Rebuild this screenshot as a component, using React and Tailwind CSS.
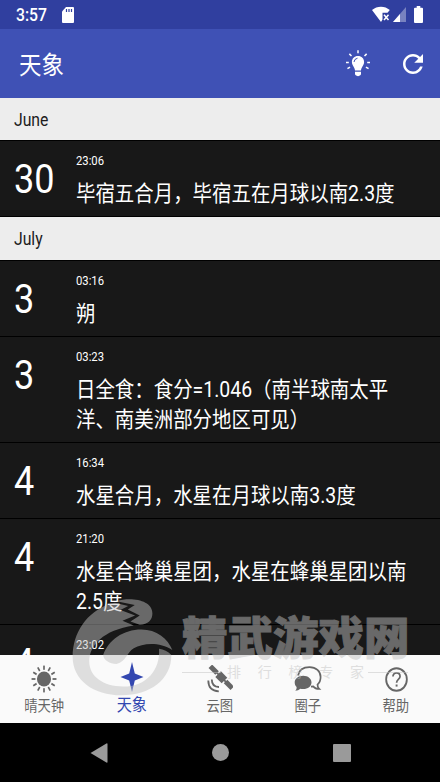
import React from 'react';

const SECTIONS = [
  {
    month: 'June',
    events: [{ day: 30, time: '23:06', text: '毕宿五合月，毕宿五在月球以南2.3度' }],
  },
  {
    month: 'July',
    events: [
      { day: 3, time: '03:16', text: '朔' },
      { day: 3, time: '03:23', text: '日全食：食分=1.046（南半球南太平洋、南美洲部分地区可见）' },
      { day: 4, time: '16:34', text: '水星合月，水星在月球以南3.3度' },
      { day: 4, time: '21:20', text: '水星合蜂巢星团，水星在蜂巢星团以南2.5度' },
      { day: 4, time: '23:02', text: '' },
    ],
  },
];

const RAYS = [0, 30, 60, 90, 120, 150, 180, 210, 240, 270, 300, 330];
const BULB_RAYS = [-120, -90, -45, 0, 45, 90, 120];

function SunIcon() {
  return (
    <svg className="h-[28px] w-[26px]" viewBox="0 0 28 28" preserveAspectRatio="none" fill="currentColor">
      <circle cx="14" cy="14" r="7.6" />
      {RAYS.map((a) => (
        <rect key={a} x="13.1" y="0.6" width="1.8" height="4.2" transform={`rotate(${a} 14 14)`} />
      ))}
    </svg>
  );
}

function StarIcon() {
  return (
    <svg className="h-[30px] w-[24px]" viewBox="0 0 24 30" fill="currentColor">
      <path d="M12 0 L14.800 11.500 L23.500 15 L14.800 18.500 L12 30 L9.200 18.500 L0.500 15 L9.200 11.500Z" />
    </svg>
  );
}

function SatelliteIcon() {
  return (
    <svg className="h-[28px] w-[26px]" viewBox="0 0 26 28">
      <g transform="translate(14.3 12.300) rotate(45)" fill="currentColor">
        <rect x="-15.500" y="-2.500" width="9.500" height="5" />
        <rect x="-6.500" y="-0.900" width="13" height="1.800" />
        <rect x="-4.500" y="-4" width="9" height="8" />
        <rect x="6" y="-2.500" width="9.500" height="5" />
      </g>
      <g fill="none" stroke="currentColor" strokeWidth="1.800">
        <path d="M4.800 14.500 C4.800 19.500 7.500 22 12 22" />
        <path d="M1.300 15.500 C1.300 22 5 26 11.800 26.300" />
      </g>
    </svg>
  );
}

function ChatIcon() {
  return (
    <svg className="h-[26px] w-[28px]" viewBox="0 0 28 26">
      <path
        d="M4 9.500 C5 4 9.500 1.200 15.500 1.200 C22 1.200 26.600 5.300 26.600 11 C26.600 14.500 25.300 17 23.500 18.600 C23.500 20.600 24 21.800 25.200 22.900 C22.500 22.900 20.500 22 19.300 20.400 L17 20.600"
        fill="none"
        stroke="currentColor"
        strokeWidth="1.700"
      />
      <path
        d="M9.200 9.800 C14 9.800 17.500 12.700 17.500 16.500 C17.500 20.300 14 23 9.200 23 C8.200 23 7.200 22.900 6.300 22.700 C5 24 3.300 24.700 1.300 24.700 C2.200 23.700 2.700 22.500 2.600 20.900 C1.300 19.700 0.700 18.200 0.700 16.500 C0.700 12.700 4.400 9.800 9.200 9.800Z"
        fill="currentColor"
      />
    </svg>
  );
}

function HelpIcon() {
  return (
    <svg className="h-[25px] w-[23px]" viewBox="0 0 24 24" preserveAspectRatio="none" fill="none">
      <circle cx="12" cy="12" r="10.800" stroke="currentColor" strokeWidth="1.900" />
      <path
        d="M8.300 9.200 C8.300 7 9.900 5.600 12 5.600 C14.100 5.600 15.700 7 15.700 9 C15.700 11.800 12.100 12 12.100 15"
        stroke="currentColor"
        strokeWidth="1.800"
      />
      <rect x="11.100" y="16.800" width="2" height="2" fill="currentColor" />
    </svg>
  );
}

const TABS = [
  { label: '晴天钟', icon: SunIcon },
  { label: '天象', icon: StarIcon, active: true },
  { label: '云图', icon: SatelliteIcon },
  { label: '圈子', icon: ChatIcon },
  { label: '帮助', icon: HelpIcon },
];

function StatusBar() {
  return (
    <div className="flex h-[29px] shrink-0 items-center bg-[#303f9f] pl-4 pr-[17px] text-white">
      <span className="w-[35px] origin-left scale-x-90 pt-[2px] text-[17.5px] font-medium leading-none">3:57</span>
      <svg className="ml-[11px] h-[16px] w-[12px]" viewBox="0 0 12 16">
        <path d="M4 0 H11 Q12 0 12 1 V15 Q12 16 11 16 H1 Q0 16 0 15 V4.500Z" fill="#fff" />
        <path d="M4.500 2 V5 M7 2 V5 M9.500 2 V5" stroke="#303f9f" strokeWidth="1.200" />
      </svg>
      <div className="flex-1" />
      <svg className="h-[17px] w-[18px]" viewBox="0 0 18 17">
        <path d="M0 4 C5 -0.500 13 -0.500 17.800 4 L15.500 6.800 H10.500 V13.500 L9 16Z" fill="#fff" />
        <path d="M12 8.800 L16.500 14 M16.500 8.800 L12 14" stroke="#fff" strokeWidth="1.500" />
      </svg>
      <svg className="ml-[3px] h-[15px] w-[13px]" viewBox="0 0 13 15">
        <path d="M13 0 V15 H0Z" fill="#fff" fillOpacity="0.350" />
        <path d="M7 7 V15 H0Z" fill="#fff" />
      </svg>
      <svg className="ml-[8px] h-[17px] w-[9px]" viewBox="0 0 9 17" fill="#fff">
        <path d="M2.700 0 H6.300 V1.700 H8 Q9 1.700 9 2.700 V16 Q9 17 8 17 H1 Q0 17 0 16 V2.700 Q0 1.700 1 1.700 H2.700Z" />
      </svg>
    </div>
  );
}

function AppBar() {
  return (
    <header className="flex h-[69px] shrink-0 items-center bg-[#3f51b5] pl-[19px] pr-[17px] text-white">
      <h1 className="origin-left scale-x-90 pt-[3px] text-[25px] leading-none">天象</h1>
      <div className="flex-1" />
      <svg className="mr-[33px] h-[27px] w-[24px]" viewBox="0 0 24 27">
        <g stroke="#fff" strokeWidth="1.500">
          {BULB_RAYS.map((a) => (
            <path key={a} d="M12 3.300 V0.300" transform={`rotate(${a} 12 12.500)`} />
          ))}
        </g>
        <path
          d="M12 6 C15.600 6 18.100 8.600 18.100 12 C18.100 15.500 15.200 17 15 20.500 H9 C8.800 17 5.900 15.500 5.900 12 C5.900 8.600 8.400 6 12 6Z"
          fill="#fff"
        />
        <path d="M9 21.800 H15 V23.800 Q15 25.800 12 26.200 Q9 25.800 9 23.800Z" fill="#fff" />
        <path d="M8 12 Q8.300 8.800 11.500 8.200" fill="none" stroke="#3f51b5" strokeWidth="1" />
      </svg>
      <svg className="h-[20px] w-[20px]" viewBox="4 4 16 16" preserveAspectRatio="none" fill="#fff">
        <path d="M17.650 6.350C16.200 4.900 14.210 4 12 4c-4.420 0-7.990 3.580-7.990 8s3.570 8 7.990 8c3.730 0 6.840-2.550 7.730-6h-2.080c-.82 2.330-3.040 4-5.650 4-3.310 0-6-2.690-6-6s2.690-6 6-6c1.660 0 3.140.69 4.220 1.780L13 11h7V4l-2.350 2.350z" />
      </svg>
    </header>
  );
}

function EventRow({ day, time, text }) {
  return (
    <li className="flex items-start border-b border-black bg-[#181818] pb-[7.5px] text-white">
      <div className="w-[76px] shrink-0 pl-[14px] pt-[19px]">
        <div className="origin-left scale-x-90 text-[40px] leading-[40px]">{day}</div>
      </div>
      {/* glyphs are condensed to 90%, so the box is widened to keep the wrap point */}
      <div className="w-[389px] shrink-0 origin-left scale-x-90 pt-3">
        <div className="text-[12.5px] leading-[15px]">{time}</div>
        <p className="mt-[10.5px] text-[21.6px] leading-[30px]">{text}</p>
      </div>
    </li>
  );
}

function EventList() {
  return (
    <main className="min-h-0 flex-1 overflow-hidden bg-[#181818]">
      {SECTIONS.map((section) => (
        <section key={section.month}>
          <h2 className="flex h-[43px] items-center border-b border-black bg-[#ededed] pl-[14px] pt-[2px] text-[#1c1c1c] [section+section>&]:h-[44px]">
            <span className="origin-left scale-x-90 text-[17.5px]">{section.month}</span>
          </h2>
          <ul>
            {section.events.map((event) => (
              <EventRow key={event.time} {...event} />
            ))}
          </ul>
        </section>
      ))}
    </main>
  );
}

function TabBar() {
  return (
    <nav className="grid h-[68px] shrink-0 grid-cols-5 bg-[#fafafa]">
      {TABS.map(({ label, icon: Icon, active }) => (
        <div
          key={label}
          className={`flex flex-col items-center ${active ? 'text-[#3347b0]' : 'text-[#666666]'}`}
        >
          <div className={`flex h-[30px] items-center ${active ? 'mt-[7px]' : 'mt-[9px]'}`}>
            <Icon />
          </div>
          <span
            className={`scale-x-90 whitespace-nowrap leading-[20px] ${
              active ? 'mt-[3px] text-[16.8px]' : 'mt-[2px] text-[14.8px]'
            }`}
          >
            {label}
          </span>
        </div>
      ))}
    </nav>
  );
}

function SystemNav() {
  return (
    <div className="flex h-[59px] shrink-0 items-center justify-center gap-[104px] bg-black">
      <svg className="h-[20px] w-[18px]" viewBox="0 0 17 20" preserveAspectRatio="none">
        <path d="M0.500 10 L15.500 0.500 Q16.500 0 16.500 1 V19 Q16.500 20 15.500 19.500Z" fill="#9a9a9a" />
      </svg>
      <div className="h-[17px] w-[17px] rounded-full bg-[#9a9a9a]" />
      <div className="h-[18px] w-[18px] rounded-[1px] bg-[#9a9a9a]" />
    </div>
  );
}

// Site mark laid over the bottom of the list and the tab bar
function Watermark() {
  return (
    <div className="pointer-events-none absolute left-[60px] top-[590px] flex text-[#c1c1c1] opacity-[0.48]">
      <svg className="h-[110px] w-[113px] shrink-0" viewBox="0 0 340 330" fill="currentColor">
        <path d="M150 42 C80 65 38 130 38 200 C38 270 100 316 185 316 C270 316 335 270 335 195 C325 183 312 178 298 176 C302 240 260 290 190 290 C130 290 88 260 88 215 C88 165 130 120 222 106 L188 92 L226 76 L182 60 L205 48 L165 38Z" />
        <path d="M170 33 C215 20 278 30 278 70 C278 90 265 102 240 104 L212 94 L240 76 L204 58 L225 45Z" />
        <path d="M130 195 C145 150 190 118 245 118 C290 118 325 145 338 180 C300 155 250 158 222 175 C200 188 200 215 170 222 C150 222 130 210 130 195Z" />
      </svg>
      <div className="w-[240px] pl-[9px] pt-[25px]">
        <div className="whitespace-nowrap text-[45.5px] font-black leading-[50px] [-webkit-text-stroke:1px_currentColor]">
          精武游戏网
        </div>
        <div className="flex h-[14px] items-center text-[14px] leading-none">
          <div className="mr-[6px] h-px w-[39px] bg-current" />
          <div className="flex w-[137px] justify-between">
            {['排', '行', '榜', '专', '家'].map((ch) => (
              <span key={ch}>{ch}</span>
            ))}
          </div>
          <div className="ml-[4px] h-px w-[40px] bg-current" />
        </div>
      </div>
    </div>
  );
}

function App() {
  return (
    <div className="relative flex h-[782px] w-[440px] flex-col overflow-hidden bg-black font-[Roboto,'Noto_Sans_CJK_SC',sans-serif]">
      <StatusBar />
      <AppBar />
      <EventList />
      <TabBar />
      <SystemNav />
      <Watermark />
    </div>
  );
}

export default App;
